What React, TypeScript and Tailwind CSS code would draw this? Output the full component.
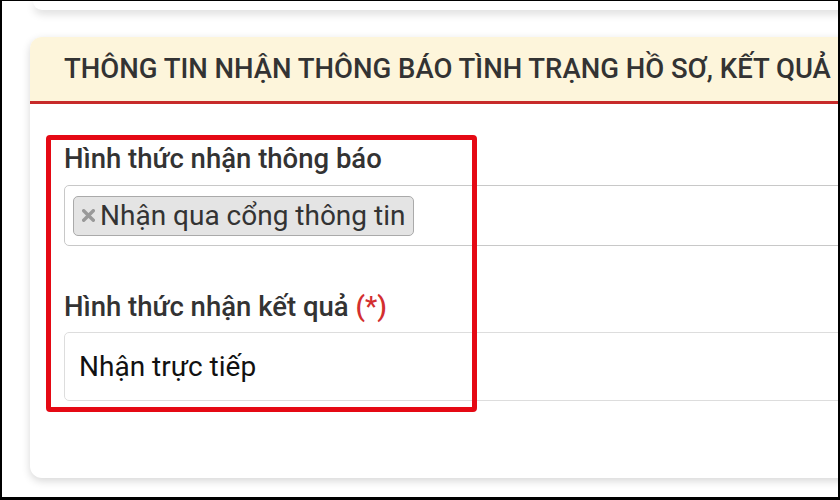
export default function App() {
  return (
    <div
      className="relative w-[840px] h-[500px] overflow-hidden bg-white border-t border-x-2 border-b-[3px] border-black"
      style={{ fontFamily: "Roboto, 'Noto Sans', sans-serif" }}
    >
      {/* previous card tail */}
      <div className="ml-[31px] w-[840px] h-[9px] bg-white rounded-bl-xl shadow-[0_4px_8px_rgba(0,0,0,0.14)]" />

      {/* main card */}
      <div className="mt-[27px] ml-[28px] w-[840px] h-[441px] bg-white rounded-xl shadow-[0_3px_8px_rgba(0,0,0,0.16)] overflow-hidden">
        <div className="h-[67px] bg-[#fdf5db] border-b-[3px] border-[#c72a2a] flex items-center px-[34px]">
          <h2 className="text-[27.5px] leading-[32px] font-medium text-[#333] whitespace-nowrap">
            THÔNG TIN NHẬN THÔNG BÁO TÌNH TRẠNG HỒ SƠ, KẾT QUẢ
          </h2>
        </div>

        <div className="pt-[39px] pl-[34px]">
          <label className="block text-[27.5px] leading-[32px] font-medium text-[#333]">
            Hình thức nhận thông báo
          </label>
          <div className="mt-[10px] h-[61px] border border-[#c8c8c8] rounded-[5px] flex items-center pl-[8px]">
            <span className="flex items-center h-[40px] bg-[#e4e4e4] border border-[#aaa] rounded-[5px] pl-[8px] pr-[8px] text-[28px] text-[#333]">
              <svg viewBox="0 0 10 10" className="w-[13px] h-[13px] mr-[5px]">
                <path d="M1.3 1.3L8.7 8.7M8.7 1.3L1.3 8.7" stroke="#999" strokeWidth="2.6" strokeLinecap="round" />
              </svg>
              Nhận qua cổng thông tin
            </span>
          </div>

          <label className="block mt-[45px] text-[27.5px] leading-[32px] font-medium text-[#333]">
            Hình thức nhận kết quả <span className="text-[#d32f2f]">(*)</span>
          </label>
          <div className="mt-[9px] h-[69px] border border-[#ddd] rounded-[5px] flex items-center pl-[14px] text-[28px] text-[#111]">
            Nhận trực tiếp
          </div>
        </div>
      </div>

      {/* annotation highlight */}
      <div className="absolute left-[44px] top-[134px] w-[431px] h-[277px] border-[5px] border-[#e50914] rounded-[4px] pointer-events-none" />
    </div>
  );
}
